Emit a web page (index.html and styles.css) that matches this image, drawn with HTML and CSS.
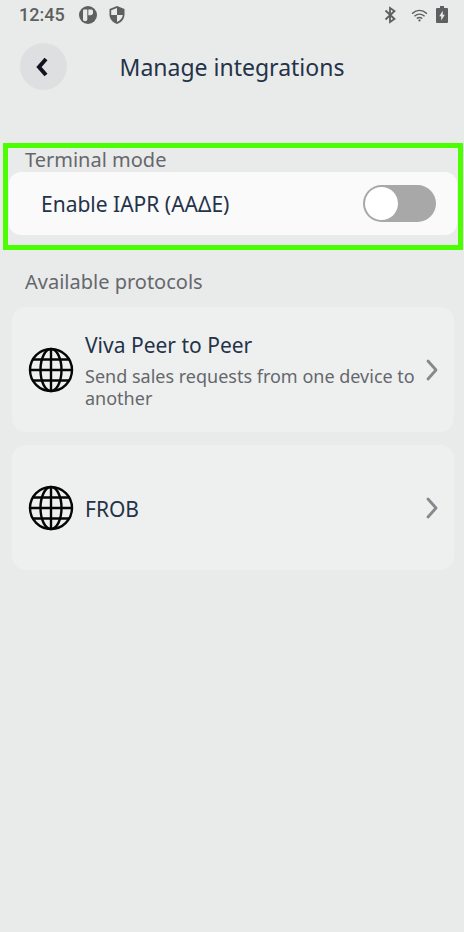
FILE: index.html
```html
<!DOCTYPE html>
<html lang="en">
<head>
<meta charset="utf-8">
<meta name="viewport" content="width=device-width, initial-scale=1">
<title>Manage integrations</title>
<link rel="stylesheet" href="styles.css">
</head>
<body>
<svg class="defs" aria-hidden="true">
  <symbol id="globe" viewBox="0 0 46 46">
    <g fill="none" stroke="currentColor" stroke-width="2.400">
      <circle cx="23" cy="23" r="21"/>
      <ellipse cx="23" cy="23" rx="10.500" ry="21"/>
      <path d="M23 2v42M2 23h42M5 12.500h36M5 33.500h36"/>
    </g>
  </symbol>
  <symbol id="chevron" viewBox="0 0 12 22">
    <path d="M2 2l8 9-8 9" fill="none" stroke="currentColor" stroke-width="2.800" stroke-linecap="round" stroke-linejoin="round"/>
  </symbol>
</svg>

<div class="status">
  <span class="clock">12:45</span>
  <svg class="app-icon" viewBox="0 0 18 18" aria-hidden="true">
    <circle cx="9" cy="9" r="9" fill="#5e5f60"/>
    <path d="M4 4.500q0-1 1-1h3.300v9.700a2.100 2.100 0 0 1-4.300 0z" fill="#e9ebea"/>
    <path d="M9.300 3.500h3q1.700 0 1.700 1.700v1.300q0 2.700-2.700 2.700h-2z" fill="#e9ebea"/>
  </svg>
  <svg class="shield-icon" viewBox="0 0 16 18" aria-hidden="true">
    <path d="M8 0l7.500 3v5.500c0 4.300-3 8-7.500 9.500C3.500 16.500.5 12.800.5 8.500V3z" fill="#5e5f60"/>
    <path d="M8 2v7h5.800c-.4 3-2.500 5.500-5.800 6.900V9H2.200V4.300z" fill="#e9ebea"/>
  </svg>
  <span class="spacer"></span>
  <svg class="bt-icon" viewBox="0 0 12 18" aria-hidden="true">
    <path d="M1.500 4.500l9 8.500L6 16V2l4.500 3-9 8.500" fill="none" stroke="#5e5f60" stroke-width="1.800"/>
  </svg>
  <svg class="wifi-icon" viewBox="0 0 18 14" aria-hidden="true">
    <g fill="none" stroke="#5e5f60" stroke-width="1.500">
      <path d="M1 5Q9-2 17 5M3.500 7.800q5.500-4.600 11 0M6 10.300q3-2.400 6 0"/>
    </g>
    <circle cx="9" cy="12.300" r="1.200" fill="#5e5f60"/>
  </svg>
  <svg class="battery-icon" viewBox="0 0 12 18" aria-hidden="true">
    <path d="M4 0h4v2h3q1 0 1 1v13q0 1-1 1H1q-1 0-1-1V3q0-1 1-1h3z" fill="#5e5f60"/>
    <path d="M6.800 4.800v4h2l-3.600 5.700v-4.300H3.200z" fill="#e9ebea"/>
  </svg>
</div>

<header class="header">
  <button class="back" type="button" aria-label="Back">
    <svg class="back-icon" viewBox="0 0 12 20" aria-hidden="true">
      <path d="M10 2L3 10l7 8" fill="none" stroke="currentColor" stroke-width="4"/>
    </svg>
  </button>
  <h1 class="title">Manage integrations</h1>
</header>

<main>
  <section class="terminal">
    <h2 class="label">Terminal mode</h2>
    <div class="setting">
      <label for="iapr">Enable IAPR (ΑΑΔΕ)</label>
      <input class="switch" id="iapr" type="checkbox" role="switch">
    </div>
  </section>

  <section class="protocols">
    <h2 class="label">Available protocols</h2>
    <a class="card" href="#peer">
      <svg class="globe" aria-hidden="true"><use href="#globe"/></svg>
      <span class="text">
        <span class="name">Viva Peer to Peer</span>
        <span class="desc">Send sales requests from one device to another</span>
      </span>
      <svg class="chevron" aria-hidden="true"><use href="#chevron"/></svg>
    </a>
    <a class="card" href="#frob">
      <svg class="globe" aria-hidden="true"><use href="#globe"/></svg>
      <span class="text"><span class="name">FROB</span></span>
      <svg class="chevron" aria-hidden="true"><use href="#chevron"/></svg>
    </a>
  </section>
</main>
</body>
</html>
```
FILE: styles.css
```css
* {
  box-sizing: border-box;
}

body {
  margin: 0;
  min-height: 100vh;
  background: #e9ebea;
  color: #243349;
  font-family: "Noto Sans", "Open Sans", sans-serif;
  font-size: 21px;
  line-height: 24px;
}

h1,
h2 {
  margin: 0;
  font-weight: 400;
}

.defs {
  position: absolute;
  width: 0;
  height: 0;
}

.status {
  display: flex;
  align-items: center;
  height: 30px;
  padding: 0 16px 0 19px;
}

.clock {
  margin-right: 14px;
  color: #5e5f60;
  font-family: Roboto, sans-serif;
  font-size: 18px;
  font-weight: 500;
}

.app-icon {
  width: 18px;
  height: 18px;
  margin-right: 12px;
}

.shield-icon {
  width: 16px;
  height: 18px;
}

.spacer {
  flex: 1;
}

.bt-icon {
  width: 12px;
  height: 18px;
  margin-right: 15px;
}

.wifi-icon {
  width: 17px;
  height: 13px;
  margin-right: 8px;
}

.battery-icon {
  width: 12px;
  height: 18px;
}

.header {
  display: grid;
  grid-template-columns: 47px 1fr 47px;
  align-items: center;
  padding: 13px 20px 0;
}

.back {
  display: grid;
  place-items: center;
  width: 47px;
  height: 47px;
  padding: 0 3px 0 0;
  border: 0;
  border-radius: 50%;
  background: #dedfe1;
  color: #10131b;
}

.back-icon {
  width: 12px;
  height: 20px;
}

.title {
  font-size: 23px;
  line-height: 28px;
  text-align: center;
}

.label {
  color: #66676d;
  font-size: 20px;
  line-height: 24px;
}

.terminal {
  margin: 53px 1px 0 3px;
  padding-bottom: 10px;
  border: 5px solid #4cff00;
}

.terminal .label {
  padding-left: 17px;
}

.setting {
  display: flex;
  align-items: center;
  justify-content: space-between;
  height: 63px;
  margin: 0 1px;
  padding: 0 21px 0 32px;
  border-radius: 12px;
  background: #fafafb;
}

.switch {
  appearance: none;
  width: 73px;
  height: 37px;
  margin: 0;
  padding: 2px;
  border-radius: 19px;
  background: #a8a8a8;
}

.switch::before {
  content: "";
  display: block;
  width: 33px;
  height: 33px;
  border-radius: 50%;
  background: #fff;
}

.switch:checked {
  background: #243349;
}

.switch:checked::before {
  margin-left: auto;
}

.protocols {
  display: grid;
  gap: 13px;
  margin-top: 20px;
  padding: 0 10px 0 12px;
}

.protocols .label {
  padding-left: 13px;
}

.card {
  display: flex;
  align-items: center;
  height: 125px;
  padding: 0 16px;
  border-radius: 14px;
  background: #eef0ef;
  color: inherit;
  text-decoration: none;
}

.globe {
  flex: none;
  width: 46px;
  height: 46px;
  margin-right: 11px;
  color: #050505;
}

.text {
  flex: 1;
  display: grid;
  gap: 8px;
  padding-top: 2px;
}

.desc {
  color: #66676d;
  font-size: 18px;
  line-height: 22px;
}

.chevron {
  flex: none;
  width: 12px;
  height: 22px;
  color: #87888d;
}
```
